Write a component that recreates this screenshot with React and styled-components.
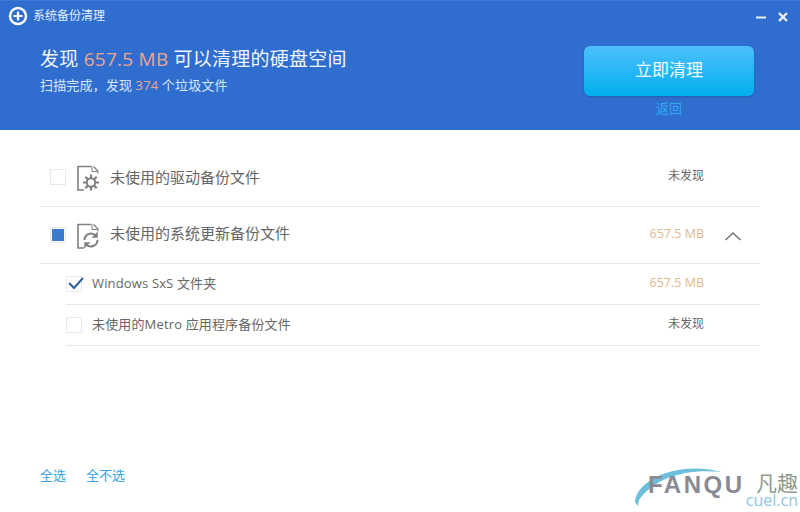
import React from 'react';
import styled, { createGlobalStyle } from 'styled-components';

const GlobalStyle = createGlobalStyle`
  html, body {
    margin: 0;
    padding: 0;
    background: #fff;
  }
  body {
    font-family: "Open Sans", "Noto Sans CJK SC", sans-serif;
  }
`;

const FileIcon = ({ children }) => (
  <svg width="26" height="26" viewBox="0 0 26 26" fill="none" stroke="#808080" strokeWidth="1.600">
    <path d="M7 25H1V1.500H14.500" />
    <path d="M16.500 1.500L21 6V8.500" strokeWidth="1.300" />
    <path d="M15 1.500V6.500H20" strokeWidth="1" />
    {children}
  </svg>
);

const GearIcon = () => (
  <FileIcon>
    <circle cx="14" cy="17.500" r="4.200" strokeWidth="2" />
    <path
      d="M14 9.500v4M14 21.500v4M6 17.500h4M18 17.500h4M8.300 11.800l2.800 2.800M16.900 20.400l2.800 2.800M19.700 11.800l-2.800 2.800M11.100 20.400l-2.800 2.800"
      strokeWidth="2.200"
    />
  </FileIcon>
);

const RefreshIcon = () => (
  <FileIcon>
    <path d="M7.500 17a6.500 6.500 0 0 1 11.300-4.300" strokeWidth="2" />
    <path d="M20.500 9v5.500H15z" fill="#808080" strokeWidth="0.500" />
    <path d="M20.500 17a6.500 6.500 0 0 1-11.300 4.300" strokeWidth="2" />
    <path d="M7.500 25v-5.500H13z" fill="#808080" strokeWidth="0.500" />
  </FileIcon>
);

const LogoIcon = () => (
  <svg width="20" height="20" viewBox="0 0 20 20" fill="none">
    <circle cx="10" cy="10" r="8" stroke="#fff" strokeWidth="2.400" />
    <path d="M1.500 12.500C3 18 9 20 13 18.500 8 18 4 16 1.500 12.500Z" fill="#fff" />
    <path d="M10 5.500v9M5.500 10h9" stroke="#fff" strokeWidth="2.200" />
  </svg>
);

const Window = styled.div`
  position: relative;
  width: 800px;
  height: 512px;
  overflow: hidden;
  background: #fff;
  display: flex;
  flex-direction: column;
`;

const Header = styled.header`
  height: 130px;
  box-sizing: border-box;
  background: #2f6ecf;
  border-top: 1px solid #3d7ad6;
  color: #fff;
  display: flex;
  flex-direction: column;
  flex-shrink: 0;
`;

const TitleBar = styled.div`
  height: 29px;
  padding: 0 12px 0 8px;
  display: flex;
  align-items: center;
  gap: 5px;
`;

const TitleText = styled.span`
  font-size: 12px;
  line-height: 16px;
  color: #e6eefa;
  flex: 1;
`;

const WindowButtons = styled.div`
  display: flex;
  align-items: center;
  gap: 12px;
  margin-top: 3px;
`;

const Banner = styled.div`
  flex: 1;
  display: flex;
  justify-content: space-between;
  padding: 16px 46px 0 40px;
`;

const Summary = styled.div`
  display: flex;
  flex-direction: column;
`;

const Headline = styled.div`
  font-size: 19px;
  line-height: 26px;
  letter-spacing: 0.250px;
  color: #f2f6fd;
`;

const Subline = styled.div`
  font-size: 13px;
  line-height: 18px;
  letter-spacing: 0.150px;
  margin-top: 4px;
  color: #dbe7f8;
`;

const Amount = styled.span`
  color: #eda48e;
`;

const Count = styled.span`
  color: #eda48e;
`;

const Action = styled.div`
  width: 170px;
  display: flex;
  flex-direction: column;
  align-items: center;
`;

const CleanButton = styled.button`
  width: 170px;
  height: 50px;
  border: none;
  border-radius: 6px;
  background: linear-gradient(#4dc0fd, #02aeee);
  box-shadow: 0 1px 2px rgba(20, 60, 130, 0.4);
  color: #eefaff;
  font-family: inherit;
  font-size: 17px;
  padding: 0 0 6px;
`;

const BackLink = styled.a`
  font-size: 13px;
  line-height: 16px;
  margin-top: 4px;
  color: #2eaaef;
`;

const List = styled.main`
  flex: 1;
  padding: 18px 40px 0;
  display: flex;
  flex-direction: column;
`;

const Row = styled.div`
  height: ${(p) => p.$height}px;
  box-sizing: border-box;
  display: flex;
  align-items: center;
  border-bottom: 1px solid #e9e9e9;
`;

const Group = styled(Row)`
  padding: 0 0 0 10px;
`;

const SubRow = styled(Row)`
  margin-left: 26px;
`;

const CheckBox = styled.span`
  width: 14px;
  height: 14px;
  border: 1px solid #e9e9e9;
  display: flex;
  align-items: center;
  justify-content: center;
  flex-shrink: 0;
  position: relative;
`;

const CheckMark = styled.svg`
  position: absolute;
  left: 0;
  top: -1px;
`;

const PartialMark = styled.span`
  width: 12px;
  height: 12px;
  background: #3b7bcb;
`;

const IconSlot = styled.span`
  display: flex;
  margin: 1px 7px 0 11px;
`;

const GroupLabel = styled.span`
  flex: 1;
  font-size: 15px;
  line-height: 20px;
  margin-bottom: ${(p) => p.$lift || 0}px;
  color: #666;
`;

const SubLabel = styled.span`
  flex: 1;
  font-size: 13px;
  line-height: 20px;
  letter-spacing: 0.150px;
  margin-bottom: ${(p) => p.$lift || 0}px;
  padding-left: 10px;
  color: #666;
`;

const Size = styled.span`
  width: 80px;
  text-align: right;
  margin: 0 56px 2px 0;
  font-size: ${(p) => (p.$found ? 12.5 : 12)}px;
  line-height: 18px;
  color: ${(p) => (p.$found ? '#e3b78f' : '#666')};
`;

const GroupSize = styled(Size)`
  margin-right: 0;
`;

const ChevronSlot = styled.span`
  width: 56px;
  display: flex;
  justify-content: center;
  padding-left: 2px;
  box-sizing: border-box;
  margin-top: 1px;
`;

const Footer = styled.footer`
  height: 65px;
  box-sizing: border-box;
  padding: 19px 0 0 40px;
  flex-shrink: 0;
  display: flex;
  gap: 20px;
`;

const FooterLink = styled.a`
  font-size: 13px;
  line-height: 18px;
  color: #36a3e0;
`;

const Watermark = styled.div`
  position: absolute;
  right: 0;
  bottom: 0;
  width: 166px;
  height: 50px;
`;

const WatermarkArc = styled.svg`
  position: absolute;
  left: 0;
  top: 0;
`;

const Brand = styled.span`
  position: absolute;
  left: 14px;
  top: 10px;
  font-family: "Liberation Sans", sans-serif;
  font-size: 24px;
  line-height: 26px;
  font-weight: 700;
  color: #8a8a94;
  letter-spacing: 2.500px;
`;

const BrandCn = styled.span`
  position: absolute;
  right: 2px;
  top: 11px;
  font-size: 21px;
  line-height: 20px;
  color: #8f9a8c;
`;

const BrandDomain = styled.span`
  position: absolute;
  right: 2px;
  bottom: 5px;
  font-size: 16px;
  line-height: 14px;
  color: #8cc8e4;
`;

export default function App() {
  return (
    <Window>
      <GlobalStyle />
      <Header>
        <TitleBar>
          <LogoIcon />
          <TitleText>系统备份清理</TitleText>
          <WindowButtons>
            <svg width="10" height="10" viewBox="0 0 10 10">
              <path d="M0 5.500h10" stroke="#e8f0fb" strokeWidth="2" />
            </svg>
            <svg width="10" height="10" viewBox="0 0 10 10">
              <path d="M1 1l8 8M9 1l-8 8" stroke="#e8f0fb" strokeWidth="2.400" />
            </svg>
          </WindowButtons>
        </TitleBar>
        <Banner>
          <Summary>
            <Headline>
              发现 <Amount>657.5 MB</Amount> 可以清理的硬盘空间
            </Headline>
            <Subline>
              扫描完成，发现 <Count>374</Count> 个垃圾文件
            </Subline>
          </Summary>
          <Action>
            <CleanButton>立即清理</CleanButton>
            <BackLink>返回</BackLink>
          </Action>
        </Banner>
      </Header>
      <List>
        <Group $height={59}>
          <CheckBox />
          <IconSlot>
            <GearIcon />
          </IconSlot>
          <GroupLabel>未使用的驱动备份文件</GroupLabel>
          <Size>未发现</Size>
        </Group>
        <Group $height={57}>
          <CheckBox>
            <PartialMark />
          </CheckBox>
          <IconSlot>
            <RefreshIcon />
          </IconSlot>
          <GroupLabel $lift={5}>未使用的系统更新备份文件</GroupLabel>
          <GroupSize $found>657.5 MB</GroupSize>
          <ChevronSlot>
            <svg width="18" height="10" viewBox="0 0 18 10" fill="none">
              <path d="M1.500 9L9 2l7.500 7" stroke="#777" strokeWidth="1.600" />
            </svg>
          </ChevronSlot>
        </Group>
        <SubRow $height={41}>
          <CheckBox>
            <CheckMark width="18" height="16" viewBox="0 0 18 16" fill="none">
              <path d="M2 7l5 5 9-10" stroke="#2d5f9e" strokeWidth="2" />
            </CheckMark>
          </CheckBox>
          <SubLabel $lift={3}>Windows SxS 文件夹</SubLabel>
          <Size $found>657.5 MB</Size>
        </SubRow>
        <SubRow $height={41}>
          <CheckBox />
          <SubLabel $lift={3}>未使用的Metro 应用程序备份文件</SubLabel>
          <Size>未发现</Size>
        </SubRow>
      </List>
      <Footer>
        <FooterLink>全选</FooterLink>
        <FooterLink>全不选</FooterLink>
      </Footer>
      <Watermark>
        <WatermarkArc width="130" height="50" viewBox="0 0 130 50" fill="none">
          <path d="M1 40C2 20 40 -2 88 10 52 6 20 16 5 38L4 44Z" fill="#6cc0dc" />
        </WatermarkArc>
        <Brand>FANQU</Brand>
        <BrandCn>凡趣</BrandCn>
        <BrandDomain>cuel.cn</BrandDomain>
      </Watermark>
    </Window>
  );
}
